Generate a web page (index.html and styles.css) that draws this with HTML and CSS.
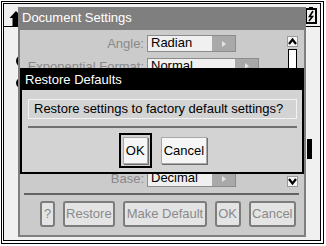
FILE: index.html
```html
<!DOCTYPE html>
<html lang="en">
<head>
  <meta charset="UTF-8">
  <meta name="viewport" content="width=device-width, initial-scale=1.0">
  <title>Document Settings</title>
  <link rel="stylesheet" href="styles.css">
</head>
<body>

  <div class="screen">
    <div class="frame">
      <div class="inner">
        <div class="topbar">
          <svg class="home" width="16" height="18" viewBox="0 0 16 18">
            <polygon points="1.5,9 8,2 14.5,9" fill="#000"/>
            <rect x="4.5" y="8.5" width="7" height="8.5" fill="#000"/>
          </svg>
          <svg class="battery" width="12" height="17" viewBox="0 0 12 17">
            <rect x="4" y="0" width="4" height="2" fill="#000"/>
            <rect x="1" y="2" width="10" height="14" fill="none" stroke="#000" stroke-width="2"/>
            <polyline points="8,4 4.5,9.5 7.5,9.5 4,14" fill="none" stroke="#000" stroke-width="1.6"/>
          </svg>
        </div>
        <div class="page">
          <span class="tab tab-1"></span>
          <span class="tab tab-2"></span>
          <span class="thumb"></span>
        </div>
      </div>
    </div>

    <div class="dialog settings">
      <div class="title">Document Settings</div>
      <div class="body">
        <div class="area">
          <div class="rows">
            <div class="row">
              <span class="label">Angle:</span>
              <span class="field"><span class="val">Radian</span><span class="arr"></span></span>
            </div>
            <div class="row">
              <span class="label">Exponential Format:</span>
              <span class="field wide"><span class="val">Normal</span><span class="arr"></span></span>
            </div>
            <div class="row">
              <span class="label">Real or Complex:</span>
              <span class="field"><span class="val">Real</span><span class="arr"></span></span>
            </div>
            <div class="row">
              <span class="label">Calculation Mode:</span>
              <span class="field"><span class="val">Auto</span><span class="arr"></span></span>
            </div>
            <div class="row">
              <span class="label">Vector Format:</span>
              <span class="field wide"><span class="val">Rectangular</span><span class="arr"></span></span>
            </div>
            <div class="row">
              <span class="label">Unit System:</span>
              <span class="field"><span class="val">SI</span><span class="arr"></span></span>
            </div>
            <div class="row">
              <span class="label">Base:</span>
              <span class="field"><span class="val">Decimal</span><span class="arr"></span></span>
            </div>
          </div>
          <div class="scroll">
            <span class="sbtn">
              <svg width="9" height="9" viewBox="0 0 9 9"><polyline points="1,7 4.5,2.5 8,7" fill="none" stroke="#000" stroke-width="2.2"/></svg>
            </span>
            <span class="track"></span>
            <span class="sbtn">
              <svg width="9" height="9" viewBox="0 0 9 9"><polyline points="1,2 4.5,6.5 8,2" fill="none" stroke="#000" stroke-width="2.2"/></svg>
            </span>
          </div>
        </div>
        <div class="sep"></div>
        <div class="buttons">
          <span class="btn">?</span>
          <span class="btn">Restore</span>
          <span class="btn">Make Default</span>
          <span class="btn">OK</span>
          <span class="btn">Cancel</span>
        </div>
      </div>
    </div>

    <div class="dialog restore">
      <div class="title">Restore Defaults</div>
      <div class="message">Restore settings to factory default settings?</div>
      <div class="rule"></div>
      <div class="actions">
        <span class="focus"><span class="dbtn">OK</span></span>
        <span class="dbtn">Cancel</span>
      </div>
    </div>
  </div>

</body>
</html>
```

FILE: styles.css
```css
body {
  margin: 0;
  font-family: "Liberation Sans", Arial, sans-serif;
  font-size: 13px;
}
.screen {
  position: relative;
  width: 326px;
  height: 246px;
  background-color: #fff;
  overflow: hidden;
}
.frame {
  box-sizing: border-box;
  width: 323px;
  height: 243px;
  margin: 1px 0 0 1px;
  border: 1px solid #000;
  padding: 1px 2px 2px 1px;
}
.inner {
  box-sizing: border-box;
  height: 100%;
  border: 1px solid #000;
  background-color: #f0f0f0;
  display: flex;
  flex-direction: column;
}
.topbar {
  height: 22px;
  border-bottom: 1px solid #000;
  display: flex;
  justify-content: space-between;
  align-items: flex-start;
}
.home {
  margin: 5px 0 0 4px;
}
.battery {
  margin: 3px 3px 0 0;
}
.page {
  flex: 1;
  position: relative;
}
.tab {
  position: absolute;
  left: 12px;
  width: 12px;
  background-color: #000;
  border-radius: 6px 0 0 6px;
}
.tab-1 {
  top: 28px;
  height: 12px;
}
.tab-2 {
  top: 51px;
  height: 10px;
}
.thumb {
  position: absolute;
  left: 303px;
  top: 112px;
  width: 5px;
  height: 20px;
  background-color: #000;
}

/* dialogs */
.dialog {
  position: absolute;
  box-sizing: border-box;
  display: flex;
  flex-direction: column;
}
.settings {
  left: 18px;
  top: 7px;
  width: 288px;
  height: 230px;
  border: 2px solid #7f7f7f;
  border-top: 0;
  background-color: #cbcbcb;
}
.settings .title {
  height: 23px;
  line-height: 21px;
  padding-left: 2px;
  background-color: #7f7f7f;
  color: #fff;
}
.body {
  flex: 1;
  display: flex;
  flex-direction: column;
}
.area {
  height: 160px;
  display: flex;
}
.rows {
  flex: 1;
  padding-top: 5px;
  display: flex;
  flex-direction: column;
  gap: 5.5px;
}
.row {
  display: flex;
  align-items: center;
  height: 17px;
}
.label {
  width: 124px;
  margin-right: 3px;
  text-align: right;
  color: #8a8a8a;
  white-space: nowrap;
}
.field {
  box-sizing: border-box;
  display: flex;
  width: 89px;
  height: 17px;
  border: 1px solid #8c8c8c;
  background-color: #f0f0f0;
}
.field.wide {
  width: 112px;
}
.val {
  flex: 1;
  padding-left: 3px;
  line-height: 14px;
  white-space: nowrap;
}
.arr {
  width: 23px;
  display: flex;
  align-items: center;
  justify-content: center;
  background-color: #a9a9a9;
}
.arr::after {
  content: "";
  border-left: 4px solid #e4e4e4;
  border-top: 3px solid transparent;
  border-bottom: 3px solid transparent;
}
.scroll {
  width: 11px;
  margin-right: 6px;
  padding: 6px 0 3px;
  display: flex;
  flex-direction: column;
  align-items: center;
  gap: 2px;
}
.sbtn {
  box-sizing: border-box;
  width: 11px;
  height: 11px;
  border: 1px solid #9a9a9a;
  background-color: #f4f4f4;
  display: flex;
  align-items: center;
  justify-content: center;
}
.track {
  flex: 1;
  box-sizing: border-box;
  width: 9px;
  border: 1px solid #000;
  background-color: #fff;
}
.sep {
  height: 2px;
  margin: 3px 5px 0 4px;
  background-color: #636363;
}
.buttons {
  display: flex;
  justify-content: flex-end;
  gap: 8px;
  margin-top: 6px;
  padding-right: 8px;
}
.btn {
  box-sizing: border-box;
  height: 26px;
  padding: 0 1.5px;
  border: 2px solid #7d7d7d;
  border-radius: 3px;
  background-color: #e4e4e4;
  color: #8a8a8a;
  line-height: 22px;
}

.restore {
  left: 20px;
  top: 68px;
  width: 284px;
  height: 106px;
  border: 2px solid #000;
  background-color: #d3d3d3;
}
.restore .title {
  height: 20px;
  line-height: 19px;
  padding-left: 3px;
  background-color: #000;
  color: #fff;
}
.message {
  box-sizing: border-box;
  height: 20px;
  margin: 9px 5px 0 6px;
  padding-left: 5px;
  border: 1px solid #f2f2f2;
  line-height: 18px;
  white-space: nowrap;
}
.rule {
  height: 2px;
  margin: 7px 5px 0 6px;
  background-color: #707070;
}
.actions {
  display: flex;
  justify-content: center;
  align-items: center;
  gap: 9px;
  margin-top: 5px;
  padding-left: 2px;
}
.focus {
  display: flex;
  padding: 2px;
  border: 2px solid #000;
}
.dbtn {
  box-sizing: border-box;
  height: 27px;
  padding: 0 2px;
  border: 1px solid #a8a8a8;
  box-shadow: 1px 1px 0 #6e6e6e;
  background-color: #f6f6f6;
  line-height: 25px;
}
```
